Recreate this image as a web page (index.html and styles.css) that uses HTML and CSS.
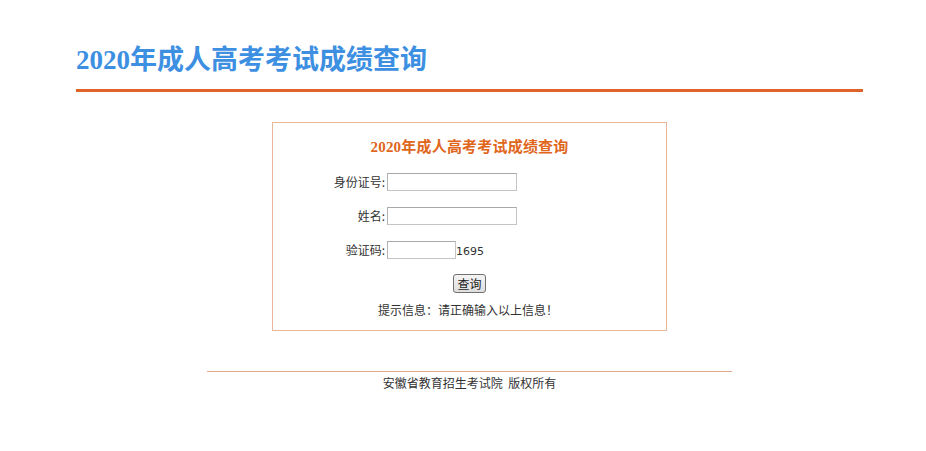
FILE: index.html
```html
<!DOCTYPE html>
<html lang="zh-CN">
<head>
<meta charset="utf-8">
<title>2020年成人高考考试成绩查询</title>
<link rel="stylesheet" href="styles.css">
</head>
<body>
<div class="page">
  <div class="header">
    <h1 class="site-title">2020年成人高考考试成绩查询</h1>
  </div>

  <div class="query-box">
    <h2 class="box-title">2020年成人高考考试成绩查询</h2>
    <div class="form">
      <div class="row">
        <label class="label">身份证号:</label>
        <input class="input" type="text">
      </div>
      <div class="row">
        <label class="label">姓名:</label>
        <input class="input" type="text">
      </div>
      <div class="row row-last">
        <label class="label">验证码:</label>
        <input class="input input-code" type="text">
        <span class="code">1695</span>
      </div>
    </div>
    <div class="actions">
      <button class="btn" type="button">查询</button>
    </div>
    <p class="hint">提示信息：请正确输入以上信息！</p>
  </div>

  <div class="footer">
    <p class="copyright">安徽省教育招生考试院&nbsp;&nbsp;版权所有</p>
  </div>
</div>
</body>
</html>
```

FILE: styles.css
```css
html, body {
  margin: 0;
  padding: 0;
  background: #ffffff;
}

body {
  font-family: "Noto Sans CJK SC", "Liberation Sans", sans-serif;
  font-size: 12px;
  color: #333333;
}

.page {
  padding-left: 13px;
}

.header {
  width: 787px;
  margin: 0 auto;
  padding-top: 44px;
}

.site-title {
  margin: 0;
  padding-bottom: 13px;
  border-bottom: 3px solid #e0642a;
  font-family: "Liberation Serif", "Noto Sans CJK SC", serif;
  font-size: 27px;
  line-height: 32px;
  letter-spacing: 0;
  font-weight: bold;
  color: #3d8fe2;
}

.query-box {
  box-sizing: border-box;
  width: 395px;
  height: 209px;
  margin: 30px auto 0;
  border: 1px solid #e8b898;
  padding-top: 14px;
}

.box-title {
  margin: 0;
  text-align: center;
  font-family: "Liberation Serif", "Noto Sans CJK SC", serif;
  font-size: 15px;
  line-height: 20px;
  font-weight: bold;
  color: #e0661c;
  letter-spacing: 0.2px;
}

.form {
  margin-top: 16px;
}

.row {
  display: flex;
  align-items: center;
  height: 18px;
  margin-bottom: 16px;
}

.row-last {
  margin-top: 1px;
  margin-bottom: 0;
}

.label {
  width: 112px;
  padding-right: 2px;
  text-align: right;
  font-size: 12px;
  line-height: 18px;
  color: #333333;
}

.input {
  box-sizing: border-box;
  width: 130px;
  height: 18px;
  margin: 0;
  padding: 0 2px;
  border: 1px solid #c4c4c4;
  border-top-color: #a9a9a9;
  border-left-color: #b4b4b4;
  background: #ffffff;
  font-size: 12px;
  outline: none;
}

.input-code {
  width: 69px;
}

.code {
  font-family: "DejaVu Sans", "Liberation Sans", sans-serif;
  font-size: 11px;
  line-height: 18px;
  padding-top: 4px;
  color: #333333;
}

.actions {
  display: flex;
  justify-content: center;
  margin-top: 15px;
}

.btn {
  box-sizing: border-box;
  width: 33px;
  height: 19px;
  padding: 0;
  margin: 0;
  border: 1px solid #707070;
  border-radius: 3px;
  background: linear-gradient(#f4f4f4, #dedede);
  font-family: "Noto Sans CJK SC", sans-serif;
  font-size: 12px;
  line-height: 15px;
  color: #222222;
}

.hint {
  margin: 8px 0 0;
  text-align: center;
  font-size: 12px;
  line-height: 18px;
  color: #333333;
  padding-right: 3px;
}

.footer {
  width: 525px;
  margin: 40px auto 0;
  border-top: 1px solid #e0a888;
  padding-top: 3px;
}

.copyright {
  margin: 0;
  text-align: center;
  font-size: 12px;
  line-height: 16px;
  color: #333333;
}
```
